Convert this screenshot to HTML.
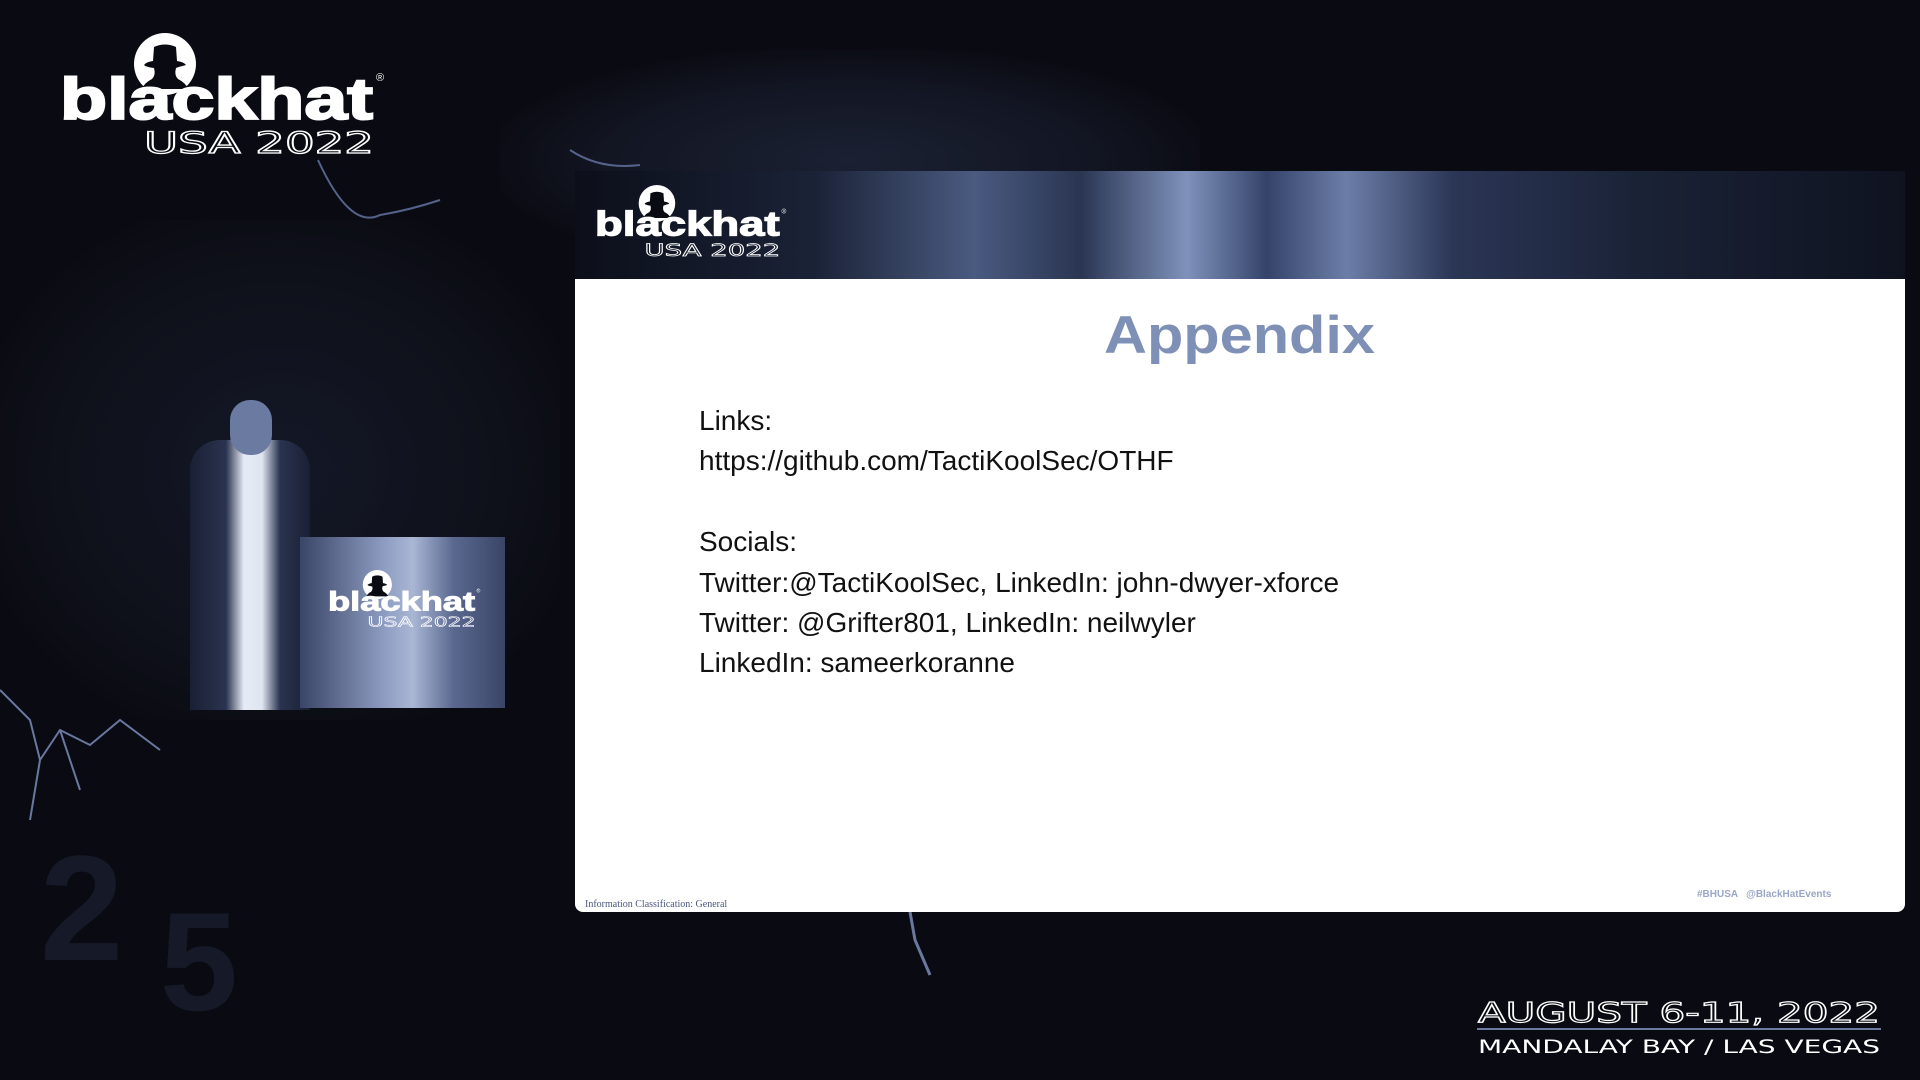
<!DOCTYPE html>
<html><head><meta charset="utf-8"><style>
*{margin:0;padding:0;box-sizing:border-box}
body{width:1920px;height:1080px;background:#0a0b12;overflow:hidden;position:relative;font-family:"Liberation Sans",sans-serif}
.abs{position:absolute}
</style></head><body>
<div class="abs" style="left:500px;top:50px;width:700px;height:220px;background:radial-gradient(ellipse at center,#1b2133 0%,#121522 50%,transparent 75%)"></div>
<div class="abs" style="left:0;top:220px;width:560px;height:500px;background:radial-gradient(ellipse at center,#141827 0%,#0e1019 60%,transparent 80%)"></div>
<svg class="abs" style="left:0;top:0" width="1920" height="1080">
<defs>
<g id="logo">
<circle cx="105" cy="31" r="31" fill="#fff"/>
<path d="M94 14 Q105 9 116 14 L117 28 Q124 29 126 32 Q118 34 116 35 Q114 42 118 46 Q126 50 128 56 L82 56 Q84 50 92 46 Q96 42 94 35 Q86 34 84 32 Q86 29 93 28 Z" fill="#0a0b12"/>
<text x="0" y="86" font-size="58" font-weight="bold" fill="#fff" stroke="#fff" stroke-width="2" font-family="Liberation Sans" textLength="313" lengthAdjust="spacingAndGlyphs">blackhat</text>
<text x="316" y="48" font-size="11" fill="#fff" font-family="Liberation Sans">®</text>
<text x="84" y="120" font-size="29" fill="none" stroke="#fff" stroke-width="1.3" font-family="DejaVu Sans" textLength="230" lengthAdjust="spacingAndGlyphs">USA 2022</text>
</g>
</defs>
<path d="M318 160 Q350 230 380 215 Q410 210 440 200" stroke="#55628a" stroke-width="2" fill="none"/>
<path d="M570 150 Q600 170 640 165" stroke="#55628a" stroke-width="2" fill="none"/>
<path d="M0 690 L30 720 L40 760 L60 730 L90 745 L120 720 L160 750 M40 760 L30 820 M60 730 L80 790" stroke="#6a78a0" stroke-width="2" fill="none"/>
<path d="M910 912 L915 940 L930 975" stroke="#6a78a0" stroke-width="3" fill="none"/>
<text x="40" y="960" font-size="150" font-weight="bold" fill="#161a28" font-family="Liberation Sans">2</text>
<text x="160" y="1010" font-size="140" font-weight="bold" fill="#161a28" font-family="Liberation Sans">5</text>
<use href="#logo" transform="translate(60,33)"/>
</svg>
<div class="abs" style="left:190px;top:440px;width:120px;height:270px;background:linear-gradient(90deg,#1a2034,#2a3350 30%,#e6ebf5 45%,#dfe5f0 60%,#2a3350 75%,#1a2034);border-radius:30px 30px 0 0"></div>
<div class="abs" style="left:230px;top:400px;width:42px;height:55px;background:#6a7aa0;border-radius:20px"></div>
<div class="abs" style="left:300px;top:537px;width:205px;height:171px;background:linear-gradient(90deg,#3a4566,#8b9ac0 40%,#a9b6d4 55%,#5a6890 75%,#3a4566)"></div>
<div class="abs" style="left:575px;top:171px;width:1330px;height:108px;background:linear-gradient(90deg,#0c0f1a 0%,#1a2236 18%,#4a5a80 30%,#2a3552 38%,#7f92bb 46%,#35436a 52%,#6c7ea8 58%,#2b3656 66%,#1a2236 80%,#0f1320 100%)"></div>
<div class="abs" style="left:575px;top:279px;width:1330px;height:633px;background:#fff;border-radius:0 0 8px 8px"></div>
<svg class="abs" style="left:0;top:0" width="1920" height="1080">
<use href="#logo" transform="translate(595,185) scale(0.59)"/>
<use href="#logo" transform="translate(328,570) scale(0.47)"/>
<text x="1104" y="353" font-size="53" font-weight="bold" fill="#7f90b6" font-family="Liberation Sans" textLength="271" lengthAdjust="spacingAndGlyphs">Appendix</text>
</svg>
<div class="abs" style="left:699px;top:401px;color:#111;font-size:28px;line-height:40.4px">
Links:<br>https://github.com/TactiKoolSec/OTHF<br><br>Socials:<br>Twitter:@TactiKoolSec, LinkedIn: john-dwyer-xforce<br>Twitter: @Grifter801, LinkedIn: neilwyler<br>LinkedIn: sameerkoranne</div>
<div class="abs" style="left:585px;top:899px;font-size:10px;color:#4a5680;font-family:'Liberation Serif',serif">Information Classification: General</div>
<div class="abs" style="left:1697px;top:889px;font-size:10px;color:#9aa6c6;font-weight:bold">#BHUSA &nbsp; @BlackHatEvents</div>
<svg class="abs" style="left:0;top:0" width="1920" height="1080">
<text x="1478" y="1022" font-size="28" fill="none" stroke="#fff" stroke-width="1.2" font-family="DejaVu Sans" textLength="402" lengthAdjust="spacingAndGlyphs">AUGUST 6-11, 2022</text>
<rect x="1477" y="1028" width="404" height="2" fill="#6b7aa0"/>
<text x="1478" y="1053" font-size="19" fill="#fff" font-family="DejaVu Sans" textLength="402" lengthAdjust="spacingAndGlyphs">MANDALAY BAY / LAS VEGAS</text>
</svg>
</body></html>
